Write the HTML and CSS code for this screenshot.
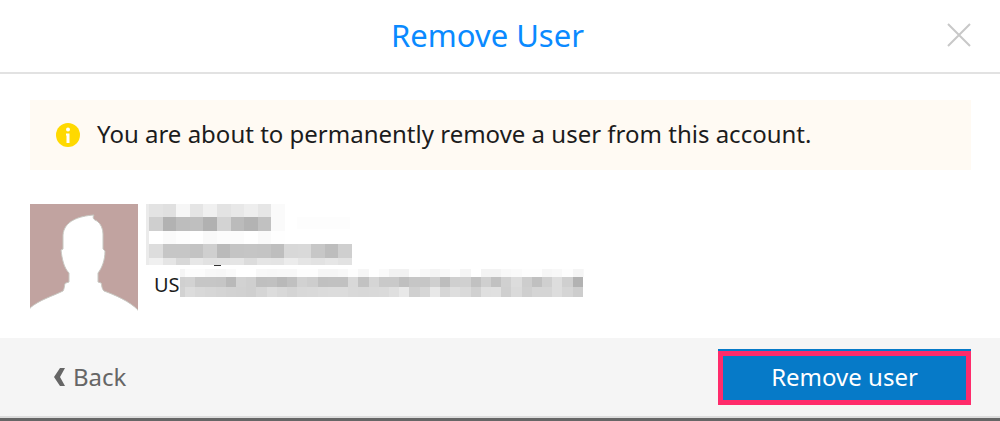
FILE: index.html
```html
<!DOCTYPE html>
<html lang="en">
<head>
<meta charset="utf-8">
<title>Remove User</title>
<link rel="stylesheet" href="styles.css">
</head>
<body>
<main class="dialog">
  <header class="dialog-header">
    <h1 class="dialog-title">Remove User</h1>
    <button class="close" type="button" aria-label="Close">
      <svg class="close-icon" viewBox="0 0 24 24" aria-hidden="true"><path d="M1 1 23 23M23 1 1 23"/></svg>
    </button>
  </header>
  <section class="dialog-body">
    <div class="notice" role="alert">
      <svg class="notice-icon" viewBox="0 0 24 24" aria-hidden="true">
        <circle cx="12" cy="12" r="12" fill="#ffd900"/>
        <circle cx="12" cy="6.6" r="2" fill="#fff"/>
        <path d="M10 10.5h3.5V20h-3v-7.5H10z" fill="#fff"/>
      </svg>
      <p class="notice-text">You are about to permanently remove a user from this account.</p>
    </div>
    <div class="user">
      <svg class="avatar" viewBox="0 0 108 108" aria-hidden="true">
        <rect width="108" height="108" fill="#c1a3a0"/>
        <path d="M0 108V104C9 96 23 92 33 87 35 84 34 79 36 79L39 78V69C34 64 32 55 31 46L33 45V31C34 17 49 12 64 11 62 14 64 16 67 17 71 20 73 25 73 30V45L75 47C75 56 72 64 68 69V78L71 79C72 79 71 84 74 87 85 91 99 97 108 106V108Z" fill="#fff" stroke="#c7c7c1" stroke-width="1"/>
        <path d="M0 105V108H108V107C99 99 85 93 74 88H33C23 93 9 98 0 105Z" fill="#fff"/>
      </svg>
      <div class="details">
        <svg class="mask mask-name" data-mask="name" viewBox="0 0 207 63" aria-hidden="true">
          <path d="M67 61h9q-4.500 2.500-9 0z" fill="#333"/>
        </svg>
        <div class="id-row">
          <span class="id-text">US</span>
          <svg class="mask mask-id" data-mask="id" viewBox="0 0 404 29" aria-hidden="true"></svg>
        </div>
      </div>
    </div>
  </section>
  <footer class="dialog-footer">
    <a class="back" href="#">
      <svg class="back-icon" viewBox="0 0 11 18" aria-hidden="true"><path d="M6 0h5L6 9l5 9H6L0 9z"/></svg>
      Back
    </a>
    <button class="remove" type="button">Remove user</button>
  </footer>
</main>
<script src="mask.js"></script>
</body>
</html>
```

FILE: mask.js
```js
// Pixelated blocks that hide the user's personal details.
// Each row: top, height, left, first cell width, cell width, cell shades (00-ff).
const masks = {
  name: [
    [0, 61, 0, 3, 3, "eb"],
    [0, 13, 3, 13.6, 13.6, "e3 e0 f6 e5 f0 e3 e8 ee e6 fa"],
    [13, 14, 3, 13.6, 13.6, "cf b2 bd bf b1 d3 bb b3 c1 fa"],
    [13, 12, 151, 53, 53, "fd"],
    [27, 13, 3, 13.6, 13.6, "ff fa fd ff f9 fc fc ff fa fe"],
    [40, 14, 3, 13.5, 13.5, "dd c6 c6 c3 cf ba c4 c5 c4 be d8 d9 c7 bd cf"],
    [54, 7, 3, 13.5, 13.5, "f0 e5 d8 e7 e2 e3 e5 dc e5 e4 ec e5 e2 e6 e2"]
  ],
  id: [
    [0, 8, 0, 5, 10.2, "f5 fc fc f8 f7 fa ff ff f8 f7 f8 f8 fd fd f6 f6 f8 fd f6 ff fa f2 f2 fd f8 f4 f8 fd f5 ff f3 f3 f8 fa fd fd f6 f8 fd f5 f8"],
    [8, 10, 0, 5, 10.2, "d0 d2 c6 c6 c5 b9 d2 cf bf c0 b9 c0 d1 cd c0 c1 c1 d8 c2 d5 c9 c9 bf c6 c6 cf bd cf d0 c1 cf c1 d0 dc cd c0 cf dd cf b2"],
    [18, 10, 0, 5, 10.2, "d2 dc d8 d6 d4 d2 d1 cf d5 dc d8 d4 d8 d9 db dc dc d9 d8 d9 da df e8 d0 d6 e8 d6 de da d0 df e0 cf da cf d5 d5 dd d5 cd"]
  ]
};

for (const svg of document.querySelectorAll("[data-mask]")) {
  const limit = svg.viewBox.baseVal.width;
  for (const [top, height, left, first, width, shades] of masks[svg.dataset.mask]) {
    let x = left;
    shades.split(" ").forEach((shade, i) => {
      const right = Math.min(Math.round(x + (i ? width : first)), limit);
      const from = Math.round(x);
      if (right > from) {
        const rect = document.createElementNS("http://www.w3.org/2000/svg", "rect");
        rect.setAttribute("x", from);
        rect.setAttribute("y", top);
        rect.setAttribute("width", right - from);
        rect.setAttribute("height", height);
        rect.setAttribute("fill", "#" + shade.repeat(3));
        svg.append(rect);
      }
      x += i ? width : first;
    });
  }
}
```

FILE: styles.css
```css
* {
  box-sizing: border-box;
}

body {
  margin: 0;
  background: #fff;
  color: #1c1c1c;
  font-family: "Noto Sans", "Open Sans", sans-serif;
}

.dialog {
  min-height: 100vh;
  display: flex;
  flex-direction: column;
  border-bottom: 3px solid #666;
}

.dialog-header {
  display: grid;
  grid-template-columns: 1fr auto 1fr;
  align-items: center;
  padding: 12px 29px 14px 4px;
  border-bottom: 2px solid #e2e2e2;
}

.dialog-title {
  grid-column: 2;
  margin: 0;
  color: #0a8aff;
  font-size: 31px;
  font-weight: 400;
  line-height: 46px;
}

.close {
  justify-self: end;
  display: flex;
  padding: 0;
  border: 0;
  background: none;
}

.close-icon {
  width: 24px;
  height: 24px;
  fill: none;
  stroke: #c8c8c8;
  stroke-width: 2;
}

.dialog-body {
  flex: 1;
  padding: 26px 29px 0 30px;
}

.notice {
  display: flex;
  align-items: center;
  gap: 17px;
  padding: 18px 26px;
  background: #fffaf3;
}

.notice-icon {
  width: 24px;
  height: 24px;
}

.notice-text {
  margin: 0;
  padding-bottom: 2px;
  font-size: 24px;
  line-height: 32px;
}

.user {
  display: flex;
  gap: 8px;
  padding: 34px 0 25px;
}

.avatar {
  width: 108px;
  height: 108px;
}

.details {
  display: flex;
  flex-direction: column;
  gap: 2px;
}

.mask {
  display: block;
  shape-rendering: crispEdges;
}

.mask-name {
  width: 207px;
  height: 63px;
}

.mask-id {
  width: 404px;
  height: 29px;
}

.id-row {
  display: flex;
  padding-left: 8px;
}

.id-text {
  font-size: 20px;
  line-height: 32px;
}

.dialog-footer {
  display: flex;
  align-items: center;
  justify-content: space-between;
  padding: 11px 29px 11px 54px;
  background: #f5f5f5;
  border-bottom: 2px solid #dcdcdc;
}

.back {
  display: flex;
  align-items: center;
  gap: 8px;
  color: #666;
  font-size: 24px;
  line-height: 34px;
  text-decoration: none;
}

.back-icon {
  width: 11px;
  height: 18px;
  fill: #666;
}

.remove {
  min-width: 253px;
  padding: 5px 0 7px;
  border: 5px solid #ff2b6b;
  background: #067ac8;
  box-shadow: 0 -2px 0 #067ac8;
  margin-top: 2px;
  color: #fff;
  font-family: inherit;
  font-size: 24px;
  line-height: 32px;
}
```
